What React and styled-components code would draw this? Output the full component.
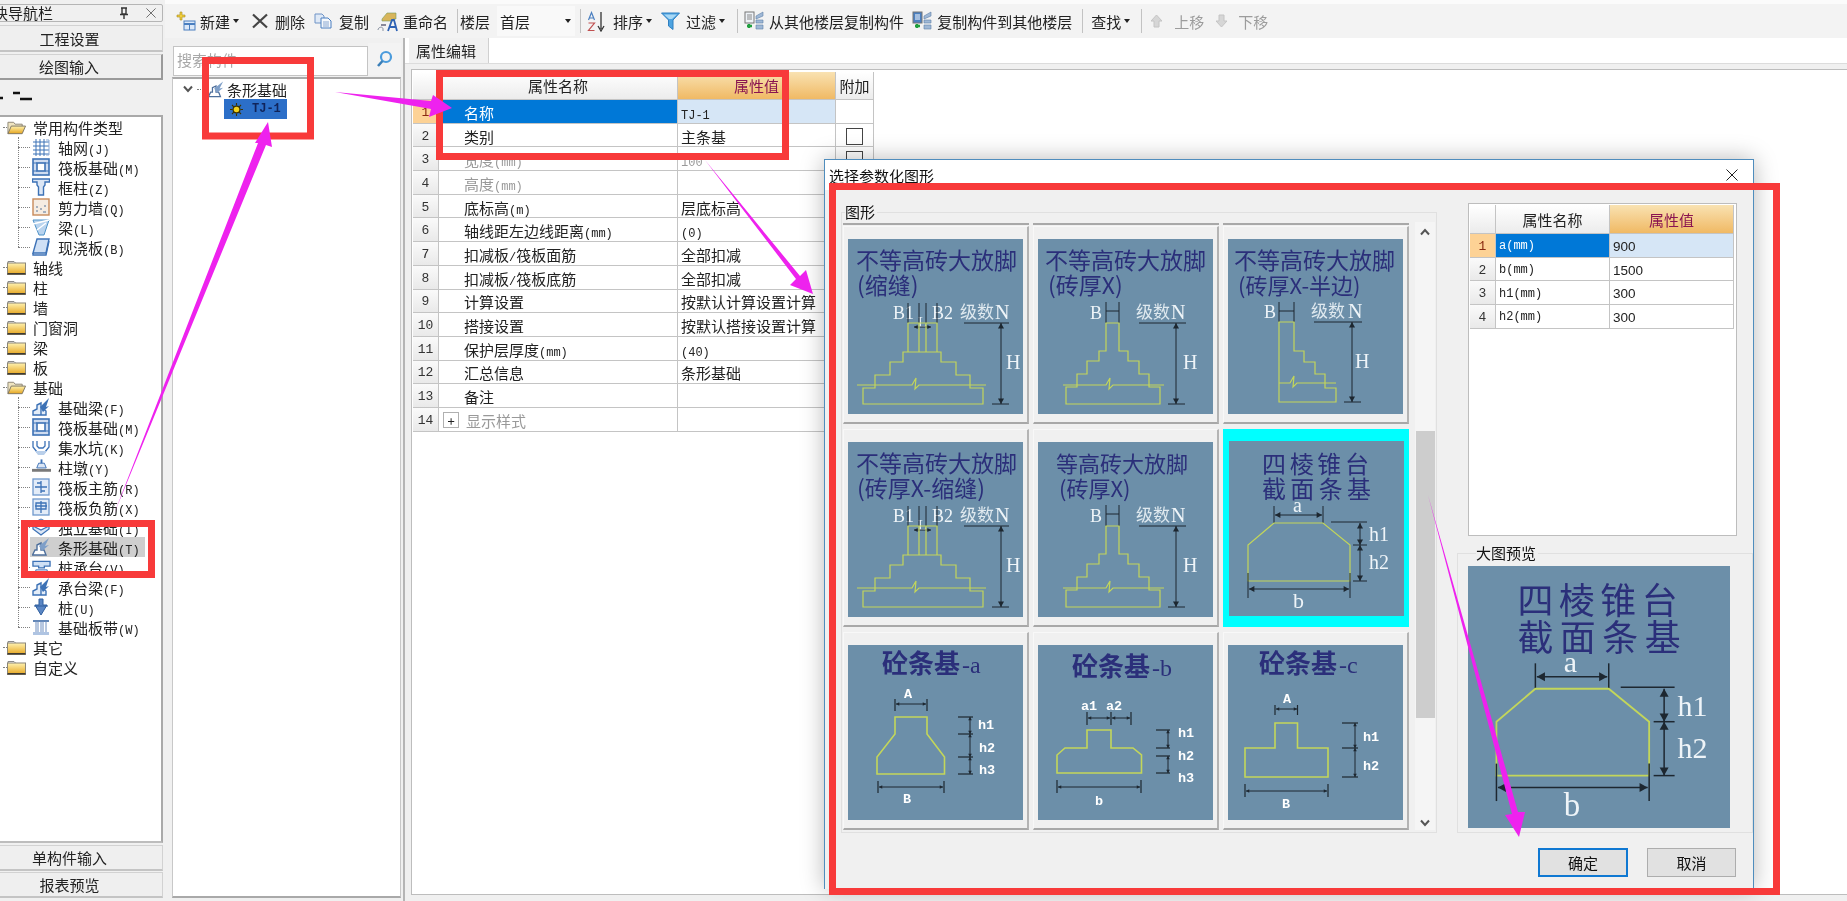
import React from "react";
import styled, { createGlobalStyle } from "styled-components";

const GlobalStyle = createGlobalStyle`
  html, body {
    margin: 0;
    padding: 0;
    background: #f0f0f0;
  }
  body {
    font-family: "Noto Sans CJK SC", "Liberation Sans", sans-serif;
    font-size: 15px;
    color: #222;
  }
`;

/* the source capture is a soft, rescaled bitmap */
const Page = styled.div`
  position: relative;
  display: flex;
  width: 1847px;
  height: 901px;
  overflow: hidden;
  background: #f0f0f0;
  filter: blur(0.3px);
`;

/* latin runs are drawn narrower than the chinese ones, like the old bitmap font */
const Lat = styled.span`
  font-family: "Liberation Mono", monospace;
  font-size: 12px;
  font-weight: 400;
`;

const Run = styled.span`
  white-space: nowrap;
`;

function Mixed({ text }) {
  return (
    <Run>
      {text
        .split(/([\x00-\x7f]+)/)
        .filter(Boolean)
        .map((part, i) =>
          /^[\x00-\x7f]/.test(part) ? <Lat key={i}>{part}</Lat> : <span key={i}>{part}</span>
        )}
    </Run>
  );
}

/* ---------- left navigation ---------- */

const Nav = styled.nav`
  flex: none;
  width: 165px;
  height: 901px;
  overflow: hidden;
`;

const NavInner = styled.div`
  display: flex;
  flex-direction: column;
  width: 187px;
  height: 901px;
  margin-left: -24px;
  padding-top: 4px;
  box-sizing: border-box;
`;

const NavTitle = styled.div`
  display: flex;
  align-items: center;
  height: 18px;
  padding-left: 1px;
  border: 1px solid #b5b5b5;
  border-radius: 2px;
  box-sizing: border-box;
  line-height: 16px;
`;

const NavTitleText = styled.span`
  flex: 1;
`;

const NavTitleTool = styled.span`
  display: flex;
  margin-right: ${(p) => p.$mr}px;
`;

const NavButton = styled.div`
  display: flex;
  align-items: center;
  justify-content: center;
  height: ${(p) => p.$h}px;
  margin-top: ${(p) => p.$mt}px;
  box-sizing: border-box;
  border: 1px solid #d2d2d2;
  border-bottom: ${(p) => (p.$active ? "2px solid #9a9a9a" : "2px solid #c4c4c4")};
  border-right: ${(p) => (p.$active ? "2px solid #9a9a9a" : "1px solid #d2d2d2")};
  background: #efefef;
`;

const NavTools = styled.div`
  display: flex;
  align-items: center;
  height: 35px;
  padding-left: 24px;
`;

const Tree = styled.div`
  flex: none;
  width: 187px;
  height: 728px;
  padding-left: 24px;
  box-sizing: border-box;
  background: #fff;
  border-top: 2px solid #a9a9a9;
  border-right: 2px solid #a9a9a9;
  border-bottom: 2px solid #bdbdbd;
`;

const TreeRow = styled.div`
  display: flex;
  align-items: center;
  height: 20px;
  white-space: nowrap;
  width: ${(p) => (p.$selected ? "115px" : "auto")};
  background: ${(p) => (p.$selected ? "#cfcfcf" : "transparent")};
`;

const Connector = styled.span`
  flex: none;
  width: ${(p) => p.$w}px;
  margin-left: ${(p) => p.$ml || 0}px;
  border-top: 1px dotted #808080;
`;

const FolderSlot = styled.span`
  flex: none;
  display: flex;
  width: 19px;
  margin-right: 7px;
`;

const LeafSlot = styled.span`
  flex: none;
  display: flex;
  width: 19px;
  margin: 0 7px 0 2px;
`;

const ChildGroup = styled.div`
  position: relative;
  margin-left: 18px;
  &::before {
    content: "";
    position: absolute;
    top: 0;
    bottom: 10px;
    left: 0;
    border-left: 1px dotted #808080;
  }
`;

const Leaf = styled(TreeRow)`
  margin-left: ${(p) => (p.$selected ? "12px" : "0")};
`;

/* ---------- work area ---------- */

const Work = styled.div`
  flex: 1;
  display: flex;
  flex-direction: column;
  min-width: 0;
`;

const TopStrip = styled.div`
  height: 4px;
  background: #fbfbfb;
`;

const Toolbar = styled.div`
  display: flex;
  align-items: center;
  height: 34px;
  padding-left: 11px;
  background: #f3f3f3;
  white-space: nowrap;
`;

const ToolBtn = styled.div`
  display: flex;
  align-items: center;
  margin-right: ${(p) => p.$mr ?? 10}px;
  color: ${(p) => (p.$off ? "#9c9c9c" : "#222")};
`;

const ToolIcon = styled.span`
  display: flex;
  flex: none;
  width: ${(p) => p.$w}px;
  margin-right: ${(p) => p.$gap ?? 5}px;
`;

const Caret = styled.span`
  display: inline-block;
  margin-left: 3px;
  border-top: 4px solid #222;
  border-left: 3.5px solid transparent;
  border-right: 3.5px solid transparent;
`;

const ToolSep = styled.span`
  width: 1px;
  height: 24px;
  margin: 0 ${(p) => p.$r ?? 8}px 0 ${(p) => p.$l ?? 0}px;
  background: #c2c2c2;
`;

const FloorSelect = styled.div`
  display: flex;
  align-items: center;
  justify-content: space-between;
  box-sizing: border-box;
  width: 78px;
  height: 30px;
  margin: 0 5px 0 7px;
  padding: 0 4px 0 3px;
  background: #f9f9f9;
`;

const Panes = styled.div`
  flex: 1;
  display: flex;
  min-height: 0;
`;

const SearchPane = styled.div`
  flex: none;
  display: flex;
  flex-direction: column;
  width: 229px;
  margin: 5px 0 0 7px;
`;

const SearchRow = styled.div`
  display: flex;
  height: 32px;
  margin-left: 1px;
`;

const SearchInput = styled.div`
  flex: none;
  width: 195px;
  height: 30px;
  margin-top: 3px;
  box-sizing: border-box;
  padding-left: 3px;
  line-height: 26px;
  color: #a8a8a8;
  background: #fff;
  border: 1px solid #c4c4c4;
`;

const SearchGo = styled.div`
  flex: 1;
  display: flex;
  align-items: center;
  justify-content: center;
  background: #f3f3f3;
`;

const SearchTree = styled.div`
  flex: 1;
  box-sizing: border-box;
  margin: 2px 0 3px 0;
  padding: 0 0 0 10px;
  background: #fff;
  border: 1px solid #c8c8c8;
  border-top: 2px solid #a9a9a9;
  border-bottom: 2px solid #a9a9a9;
`;

const SearchNode = styled.div`
  display: flex;
  align-items: center;
  height: 20px;
`;

const Chevron = styled.span`
  display: flex;
  width: 14px;
`;

const NodeIcon = styled.span`
  flex: none;
  display: flex;
  width: 16px;
  margin: 0 3px 0 1px;
  svg {
    width: 16px;
    height: 19px;
  }
`;

const SelectedNode = styled.div`
  display: flex;
  align-items: center;
  height: 20px;
  width: 63px;
  margin-left: 41px;
  padding-left: 6px;
  box-sizing: border-box;
  background: #2c6fc8;
  color: #10245a;
`;

const NodeCode = styled.span`
  margin-left: 9px;
  font-family: "Liberation Mono", monospace;
  font-size: 12px;
  font-weight: 700;
`;

const EditPane = styled.div`
  flex: 1;
  display: flex;
  flex-direction: column;
  margin-left: 2px;
  background: #fff;
  border-left: 2px solid #b5b5b5;
  min-width: 0;
`;

const TabRow = styled.div`
  display: flex;
  align-items: flex-end;
  height: 26px;
  box-sizing: border-box;
  border-bottom: 1px solid #dcdcdc;
  background: #fff;
`;

const Tab = styled.div`
  width: 80px;
  height: 25px;
  margin-left: 4px;
  box-sizing: border-box;
  padding-left: 7px;
  line-height: 26px;
  background: #f1f1f1;
  border-right: 1px solid #d0d0d0;
`;

const EditBody = styled.div`
  flex: 1;
  padding: 5px 0 6px 6px;
  background: #f0f0f0;
  min-height: 0;
  display: flex;
`;

const GridBox = styled.div`
  flex: 1;
  padding: 2px 0 0 1px;
  background: #fff;
  border: 1px solid #bdbdbd;
  border-right: none;
`;

const PropGrid = styled.div`
  display: grid;
  grid-template-columns: ${(p) => p.$cols};
  grid-auto-rows: 23.7px;
  grid-template-rows: ${(p) => p.$head}px;
`;

const GridCell = styled.div`
  display: flex;
  align-items: center;
  box-sizing: border-box;
  padding-left: ${(p) => p.$pl ?? 3}px;
  padding-top: 2px;
  border-right: 1px solid #c4c4c4;
  border-bottom: 1px solid #c4c4c4;
  white-space: nowrap;
  overflow: hidden;
  background: ${(p) => p.$bg || "#fff"};
  color: ${(p) => p.$color || "#222"};
`;

const HeadCell = styled(GridCell)`
  justify-content: center;
  padding-left: 0;
  padding-top: 0;
  background: linear-gradient(#ffffff, #ececec);
`;

const ValueHead = styled(HeadCell)`
  background: linear-gradient(#f9e2b2, #f0b964);
  color: #8a1450;
`;

const NumHead = styled(HeadCell)`
  background: linear-gradient(#ffffff, #ebebeb);
`;

const NumCell = styled(GridCell)`
  justify-content: center;
  padding-left: 0;
  font-family: "Liberation Mono", monospace;
  font-size: 13px;
  background: ${(p) => (p.$on ? "#fdd295" : "linear-gradient(#fafafa, #e9e9e9)")};
  color: ${(p) => (p.$on ? "#8a2a10" : "#333")};
`;

const SansNum = styled.span`
  font-family: "Liberation Sans", sans-serif;
  font-size: 13.5px;
`;

const CheckBox = styled.span`
  width: 15px;
  height: 15px;
  margin: 0 auto;
  border: 1px solid #444;
  background: #fff;
`;

const PlusBox = styled.span`
  flex: none;
  display: flex;
  align-items: center;
  justify-content: center;
  width: 14px;
  height: 14px;
  margin-right: 7px;
  border: 1px solid #b0b0b0;
  font-size: 13px;
  line-height: 13px;
  color: #222;
`;

/* ---------- dialog ---------- */

const Dialog = styled.section`
  position: absolute;
  left: 824px;
  top: 159px;
  display: flex;
  flex-direction: column;
  width: 930px;
  height: 730px;
  box-sizing: border-box;
  background: #f0f0f0;
  border: 1px solid #4f8dbd;
  border-bottom: none;
  box-shadow: 0 0 22px rgba(0, 0, 0, 0.28);
`;

const DialogTitle = styled.header`
  flex: none;
  display: flex;
  align-items: center;
  justify-content: space-between;
  height: 30px;
  padding: 0 15px 0 4px;
  background: #fff;
  color: #111;
`;

const DialogBody = styled.div`
  flex: 1;
  display: flex;
  flex-direction: column;
  padding: 12px 0 0 16px;
`;

const DialogMain = styled.div`
  display: flex;
  height: 631px;
`;

const Group = styled.fieldset`
  box-sizing: border-box;
  margin: 0;
  min-width: 0;
  border: 1px solid #e0e0e0;
  padding: 0 ${(p) => p.$pr ?? 0}px 0 ${(p) => p.$pl ?? 0}px;
`;

const ShapeGroup = styled(Group)`
  flex: none;
  width: 596px;
  height: 631px;
`;

const GroupLegend = styled.legend`
  margin-left: ${(p) => p.$ml ?? 2}px;
  padding: 0 2px 0 0;
  height: 20px;
  line-height: 20px;
  color: #111;
`;

const ShapeArea = styled.div`
  display: flex;
  height: 608px;
`;

const ShapeColumn = styled.div`
  flex: none;
  width: 566px;
`;

/* bottom edge of the row scrolled out above the first visible one */
const ClipRow = styled.div`
  display: grid;
  grid-template-columns: repeat(3, 186px);
  column-gap: 4px;
  height: 3px;
  margin-bottom: 1px;
`;

const ClipEdge = styled.div`
  background: #f0f0f0;
  border-bottom: 2px solid #a8a8a8;
`;

const ShapeGrid = styled.div`
  display: grid;
  grid-template-columns: repeat(3, 186px);
  grid-template-rows: repeat(3, 198px);
  column-gap: 4px;
  row-gap: 5px;
`;

const ShapeCell = styled.div`
  display: flex;
  justify-content: center;
  box-sizing: border-box;
  padding-top: 12px;
  background: ${(p) => (p.$on ? "#00ffff" : "#f0f0f0")};
  border-top: ${(p) => (p.$on ? "none" : "1px solid #f8f8f8")};
  border-left: ${(p) => (p.$on ? "none" : "1px solid #f8f8f8")};
  border-right: ${(p) => (p.$on ? "none" : "2px solid #b4b4b4")};
  border-bottom: ${(p) => (p.$on ? "none" : "2px solid #a8a8a8")};
`;

const ScrollTrack = styled.div`
  flex: none;
  display: flex;
  flex-direction: column;
  align-items: center;
  width: 20px;
  margin-left: 6px;
  background: #f5f5f5;
`;

const ScrollArrow = styled.span`
  display: flex;
  margin-top: ${(p) => p.$mt}px;
`;

const ScrollThumb = styled.div`
  flex: none;
  width: 19px;
  height: 287px;
  margin-top: 195px;
  background: #cdcdcd;
`;

const RightCol = styled.div`
  flex: none;
  display: flex;
  flex-direction: column;
  width: 296px;
  margin-left: 20px;
`;

const ParamBox = styled.div`
  width: 269px;
  height: 333px;
  margin: 1px 0 0 11px;
  padding: 1px 0 0 1px;
  box-sizing: border-box;
  background: #fff;
  border: 1px solid #bdbdbd;
`;

const PreviewGroup = styled(Group)`
  width: 296px;
  height: 290px;
  margin-top: 7px;
  padding-top: 3px;
`;

const DialogFooter = styled.footer`
  display: flex;
  justify-content: flex-end;
  gap: 19px;
  padding: 15px 17px 0 0;
`;

const DialogButton = styled.button`
  width: ${(p) => p.$w}px;
  height: 29px;
  padding: 0;
  font: inherit;
  color: #111;
  background: #e1e1e1;
  border: ${(p) => (p.$primary ? "2px solid #0f78d2" : "1px solid #adadad")};
`;

/* ---------- parametric drawings ---------- */

const Drawing = styled.svg`
  display: block;
  flex: none;
  background: #6c8fa9;
`;

const TitleCn = styled.text`
  font-family: "Noto Sans CJK SC", sans-serif;
  font-size: ${(p) => p.$size || 23}px;
  font-weight: ${(p) => p.$weight || 400};
  fill: #2b2f7a;
`;

const Serif = styled.text`
  font-family: "Liberation Serif", "Noto Sans CJK SC", serif;
  font-size: ${(p) => p.$size || 18}px;
  fill: ${(p) => p.$fill || "#eef4f8"};
`;

const CnLabel = styled.text`
  font-family: "Noto Sans CJK SC", sans-serif;
  font-size: 17px;
  fill: #dfe9ef;
`;

const BoldLabel = styled.text`
  font-family: "Liberation Mono", monospace;
  font-size: 13.5px;
  font-weight: 700;
  fill: #fff;
`;

const DARK = "#1d2730";
const YELLOW = "#c3d65a";

function VDim({ x, y1, y2, s = 3 }) {
  return (
    <g>
      <line x1={x} x2={x} y1={y1} y2={y2} stroke={DARK} />
      <polygon points={`${x},${y1} ${x - s},${y1 + s * 1.8} ${x + s},${y1 + s * 1.8}`} fill={DARK} />
      <polygon points={`${x},${y2} ${x - s},${y2 - s * 1.8} ${x + s},${y2 - s * 1.8}`} fill={DARK} />
    </g>
  );
}

function HDim({ y, x1, x2, s = 3 }) {
  return (
    <g>
      <line x1={x1} x2={x2} y1={y} y2={y} stroke={DARK} />
      <polygon points={`${x1},${y} ${x1 + s * 1.8},${y - s} ${x1 + s * 1.8},${y + s}`} fill={DARK} />
      <polygon points={`${x2},${y} ${x2 - s * 1.8},${y - s} ${x2 - s * 1.8},${y + s}`} fill={DARK} />
    </g>
  );
}

function Ln({ x1, y1, x2 = x1, y2 = y1, w = 1 }) {
  return <line x1={x1} y1={y1} x2={x2} y2={y2} stroke={DARK} strokeWidth={w} />;
}

function Shape({ d, w = 1.2 }) {
  return <path d={d} fill="none" stroke={YELLOW} strokeWidth={w} />;
}

function Svg({ size = 175, children }) {
  return (
    <Drawing width={size} height={size} viewBox="0 0 175 175">
      {children}
    </Drawing>
  );
}

function BrickSplit({ sub }) {
  return (
    <Svg>
      <TitleCn x="8" y="30">不等高砖大放脚</TitleCn>
      <TitleCn x="9" y="55">{sub}</TitleCn>
      <Serif x="45" y="80">B1</Serif>
      <Serif x="84" y="80">B2</Serif>
      <CnLabel x="112" y="79">级数</CnLabel>
      <Serif x="147" y="80" $size={20}>N</Serif>
      <Serif x="70" y="88" $size={14}>L</Serif>
      <Ln x1={60} y1={64} y2={84} />
      <Ln x1={71} y1={64} y2={84} />
      <Ln x1={78} y1={64} y2={84} />
      <Ln x1={89} y1={64} y2={84} />
      <HDim y={88} x1={66} x2={83} s={2} />
      <Shape d="M71 84V113H60V84H89V113H78V84M71 113H78V84M60 113H55V123H42V136H27V149H15V165H135V149H122V136H108V123H93V113H89" />
      <Shape d="M9 146H64L68 139L67 150L71 146H138" />
      <Ln x1={116} x2={161} y1={84} />
      <VDim x={153} y1={84} y2={165} />
      <Ln x1={144} x2={161} y1={165} />
      <Serif x="158" y="130" $size={20}>H</Serif>
    </Svg>
  );
}

function BrickSingle({ title, tx = 7, sub, size = 23 }) {
  return (
    <Svg>
      <TitleCn x={tx} y="30" $size={size}>{title}</TitleCn>
      <TitleCn x={tx + 3} y="55" $size={size}>{sub}</TitleCn>
      <Serif x="52" y="80">B</Serif>
      <Ln x1={68} y1={63} y2={84} />
      <Ln x1={81} y1={63} y2={84} />
      <Ln x1={68} x2={81} y1={72} />
      <CnLabel x="98" y="79">级数</CnLabel>
      <Serif x="133" y="80" $size={20}>N</Serif>
      <Shape d="M68 84H81V112H90V122H101V135H111V148H122V165H28V148H39V135H49V122H61V112H68Z" />
      <Shape d="M25 146H68L72 139L71 150L75 146H126" />
      <Ln x1={101} x2={148} y1={84} />
      <VDim x={138} y1={84} y2={165} />
      <Ln x1={130} x2={147} y1={165} />
      <Serif x="145" y="130" $size={20}>H</Serif>
    </Svg>
  );
}

function BrickHalf() {
  return (
    <Svg>
      <TitleCn x="6" y="30">不等高砖大放脚</TitleCn>
      <TitleCn x="10" y="55" $size={22}>(砖厚X-半边)</TitleCn>
      <Serif x="36" y="79">B</Serif>
      <Ln x1={51} y1={63} y2={83} />
      <Ln x1={66} y1={63} y2={83} />
      <Ln x1={51} x2={66} y1={72} />
      <CnLabel x="83" y="78">级数</CnLabel>
      <Serif x="120" y="79" $size={20}>N</Serif>
      <Shape d="M51 83H66V112H76V123H87V135H97V149H108V163H51Z" />
      <Shape d="M51 144H62L66 137L65 148L69 144H108" />
      <Ln x1={86} x2={134} y1={83} />
      <VDim x={124} y1={83} y2={163} />
      <Ln x1={116} x2={133} y1={163} />
      <Serif x="127" y="129" $size={20}>H</Serif>
    </Svg>
  );
}

function Frustum({ size }) {
  return (
    <Svg size={size}>
      <TitleCn x="33" y="32" $size={24} textLength="107">四棱锥台</TitleCn>
      <TitleCn x="33" y="57" $size={24} textLength="109">截面条基</TitleCn>
      <Serif x="64" y="71" $size={20}>a</Serif>
      <Ln x1={45} y1={65} y2={82} />
      <Ln x1={94} y1={65} y2={82} />
      <HDim y={74} x1={46} x2={93} />
      <Shape d="M45 82H94L121 104V140H19V104Z" />
      <Ln x1={102} x2={138} y1={81} />
      <Ln x1={124} x2={138} y1={104} />
      <Ln x1={124} x2={138} y1={140} />
      <VDim x={131} y1={82} y2={104} />
      <VDim x={131} y1={104} y2={140} />
      <Serif x="140" y="100" $size={20}>h1</Serif>
      <Serif x="140" y="128" $size={20}>h2</Serif>
      <Ln x1={19} y1={132} y2={157} />
      <Ln x1={121} y1={132} y2={157} />
      <HDim y={148} x1={20} x2={120} />
      <Serif x="64" y="167" $size={22}>b</Serif>
    </Svg>
  );
}

function Concrete({ letter, tx, ty, children }) {
  return (
    <Svg>
      <TitleCn x={tx} y={ty} $size={26} $weight={700}>砼条基</TitleCn>
      <Serif x={tx + 80} y={ty} $size={24} $fill="#2b2f7a">-{letter}</Serif>
      {children}
    </Svg>
  );
}

function ConcreteA() {
  return (
    <Concrete letter="a" tx={34} ty={28}>
      <BoldLabel x="56" y="53">A</BoldLabel>
      <Ln x1={47} y1={54} y2={66} w={1.2} />
      <Ln x1={79} y1={54} y2={66} w={1.2} />
      <HDim y={59} x1={48} x2={78} s={1.8} />
      <Shape w={1.6} d="M47 72H79V89L96.5 112V129H29V112L47 89Z" />
      {[72, 89, 112, 129].map((y) => <Ln key={y} x1={110} x2={125} y1={y} w={1.2} />)}
      <VDim x={122} y1={72} y2={89} s={1.8} />
      <VDim x={122} y1={89} y2={112} s={1.8} />
      <VDim x={122} y1={112} y2={129} s={1.8} />
      <BoldLabel x="130" y="84">h1</BoldLabel>
      <BoldLabel x="131" y="107">h2</BoldLabel>
      <BoldLabel x="131" y="129">h3</BoldLabel>
      <Ln x1={30} y1={136} y2={148} w={1.2} />
      <Ln x1={96} y1={136} y2={148} w={1.2} />
      <HDim y={142} x1={31} x2={95} s={1.8} />
      <BoldLabel x="55" y="158">B</BoldLabel>
    </Concrete>
  );
}

function ConcreteB() {
  return (
    <Concrete letter="b" tx={34} ty={31}>
      <BoldLabel x="43" y="65">a1</BoldLabel>
      <BoldLabel x="68" y="65">a2</BoldLabel>
      <Ln x1={49} y1={67} y2={80} w={1.2} />
      <Ln x1={73} y1={67} y2={80} w={1.2} />
      <Ln x1={93} y1={67} y2={80} w={1.2} />
      <HDim y={73} x1={50} x2={72} s={1.8} />
      <HDim y={73} x1={74} x2={92} s={1.8} />
      <Shape w={1.6} d="M49 85H73V103H95L103.5 110V128H19V110L27 103H49Z" />
      {[85, 103, 111, 128].map((y) => <Ln key={y} x1={118} x2={132} y1={y} w={1.2} />)}
      <VDim x={130} y1={85} y2={103} s={1.8} />
      <VDim x={130} y1={111} y2={128} s={1.8} />
      <BoldLabel x="140" y="92">h1</BoldLabel>
      <BoldLabel x="140" y="115">h2</BoldLabel>
      <BoldLabel x="140" y="137">h3</BoldLabel>
      <Ln x1={19} y1={135} y2={148} w={1.2} />
      <Ln x1={103} y1={135} y2={148} w={1.2} />
      <HDim y={142} x1={20} x2={102} s={1.8} />
      <BoldLabel x="57" y="160">b</BoldLabel>
    </Concrete>
  );
}

function ConcreteC() {
  return (
    <Concrete letter="c" tx={31} ty={28}>
      <BoldLabel x="55" y="58">A</BoldLabel>
      <Ln x1={47} y1={60} y2={70} w={1.2} />
      <Ln x1={69.5} y1={60} y2={70} w={1.2} />
      <HDim y={64} x1={48} x2={69} s={1.8} />
      <Shape w={1.6} d="M47 78H69.5V103H100V132H17V103H47Z" />
      {[78, 103, 132].map((y) => <Ln key={y} x1={114} x2={130} y1={y} w={1.2} />)}
      <VDim x={127} y1={78} y2={103} s={1.8} />
      <VDim x={127} y1={103} y2={132} s={1.8} />
      <BoldLabel x="135" y="96">h1</BoldLabel>
      <BoldLabel x="135" y="125">h2</BoldLabel>
      <Ln x1={17} y1={139} y2={152} w={1.2} />
      <Ln x1={100} y1={139} y2={152} w={1.2} />
      <HDim y={146} x1={18} x2={99} s={1.8} />
      <BoldLabel x="54" y="163">B</BoldLabel>
    </Concrete>
  );
}

/* ---------- icons ---------- */

const BLUE = "#3d72b6";

const Ico = ({ w = 18, h = 18, vb = "0 0 18 18", children }) => (
  <svg width={w} height={h} viewBox={vb} fill="none">
    {children}
  </svg>
);

const GradDefs = () => (
  <svg width="0" height="0" style={{ position: "absolute" }}>
    <defs>
      <linearGradient id="folderFill" x1="0" y1="0" x2="0" y2="1">
        <stop offset="0" stopColor="#fff2b0" />
        <stop offset="1" stopColor="#e5a51f" />
      </linearGradient>
    </defs>
  </svg>
);

const FolderClosed = () => (
  <Ico w={19} h={15} vb="0 0 19 15">
    <path d="M1 3V1.5H7L8.5 3" stroke="#8a8a8a" />
    <rect x="0.5" y="3" width="18" height="11.5" fill="url(#folderFill)" stroke="#8c8676" />
    <rect x="0.5" y="13" width="18" height="1.5" fill="#3e3a30" />
  </Ico>
);

const FolderOpen = () => (
  <Ico w={20} h={15} vb="0 0 20 15">
    <path d="M1 14V2H7L8.5 4H16V6" fill="#efe4c0" stroke="#8c8676" />
    <path d="M1 14L4.5 6H19.5L16 14Z" fill="url(#folderFill)" stroke="#7c7463" />
  </Ico>
);

const treeIcons = {
  grid: (
    <Ico>
      <path d="M1 4H17M1 8H17M1 12H17M1 16H17M4 1V18M8 1V18M12 1V18" stroke={BLUE} />
      <path d="M14 2H17V17H14" stroke="#89a9d6" />
    </Ico>
  ),
  raft: (
    <Ico>
      <rect x="1" y="1" width="16" height="16" fill="#cfdcf0" stroke={BLUE} strokeWidth="1.6" />
      <rect x="5" y="5" width="8" height="8" fill="#fff" stroke={BLUE} strokeWidth="1.6" />
      <path d="M1 5H5M13 5H17M1 13H5M13 13H17" stroke={BLUE} />
    </Ico>
  ),
  column: (
    <Ico>
      <path d="M0.5 1H17.5V4H13V7L11.5 9V17H6.5V9L5 7V4H0.5Z" fill="#dbe6f5" stroke={BLUE} strokeWidth="1.4" />
    </Ico>
  ),
  wall: (
    <Ico>
      <rect x="1" y="1" width="16" height="16" fill="#f5ece2" stroke="#c88a5a" strokeWidth="1.4" />
      <path d="M4 13H6M8 11H10M11 14H14M4 9H6M12 8H14" stroke="#8a9ab0" strokeWidth="1.4" />
    </Ico>
  ),
  beam: (
    <Ico>
      <path d="M1 2H17L12 17H7Z" fill="#b8d3ee" stroke="#4f93c8" />
      <path d="M1 6L17 2M5 12L14 5" stroke="#fff" strokeWidth="1.4" />
    </Ico>
  ),
  slab: (
    <Ico>
      <path d="M5 1H17L14 15H1Z" fill="#cfe0f5" stroke={BLUE} strokeWidth="1.4" />
      <path d="M1 15V17H14L17 3" stroke={BLUE} strokeWidth="1.4" />
    </Ico>
  ),
  footing: (
    <Ico>
      <path d="M1 17V13L5 11V7L9 5V17ZM9 17H14V13L10 10" fill="#e4edf8" stroke={BLUE} strokeWidth="1.4" />
      <path d="M8 9L17 0L14 9L17 8L11 14Z" fill="#3d72b6" />
    </Ico>
  ),
  pit: (
    <Ico>
      <path d="M1 3V9L5 14H13L17 9V3M5 3V8L7 10H11L13 8V3" stroke={BLUE} strokeWidth="1.3" />
      <path d="M3 13L6 17H12L15 13" fill="#b9cfea" />
    </Ico>
  ),
  pier: (
    <Ico w={20} vb="0 0 20 18">
      <path d="M7 5H13L15 10H5Z" fill="#dbe6f5" stroke={BLUE} />
      <path d="M9 1H11V5H9Z" fill={BLUE} />
      <rect x="0" y="11" width="20" height="3" fill="#7a7a7a" />
    </Ico>
  ),
  rebarMain: (
    <Ico>
      <rect x="1" y="1" width="16" height="16" fill="#e3ecf8" stroke="#6f98cc" strokeWidth="1.3" />
      <path d="M9 3V15M3 9H15M5 5H9M9 13H13" stroke={BLUE} strokeWidth="1.3" />
    </Ico>
  ),
  rebarNeg: (
    <Ico>
      <rect x="1" y="1" width="16" height="16" fill="#e3ecf8" stroke="#6f98cc" strokeWidth="1.3" />
      <path d="M4 5H14V11H4ZM9 3V15M3 8H15" stroke={BLUE} strokeWidth="1.3" />
    </Ico>
  ),
  isolated: (
    <Ico>
      <path d="M1 8L9 12L17 8V11L9 17L1 11Z" fill="#dbe6f5" stroke={BLUE} strokeWidth="1.3" />
      <path d="M5 3L9 1L13 3L9 7Z" stroke={BLUE} />
    </Ico>
  ),
  strip: (
    <Ico>
      <path d="M0.5 17L3 12H5V7L9 5V12H12L14 17Z" fill="#fff" stroke="#4d6f9c" strokeWidth="1.4" />
      <path d="M7 8L17 0L13 8L17 7L10 13Z" fill="#7f9fc8" />
    </Ico>
  ),
  cap: (
    <Ico w={20} vb="0 0 20 18">
      <path d="M1 3H19V8H13V10H7V8H1Z" fill="#cfe0f5" stroke={BLUE} strokeWidth="1.4" />
      <path d="M4 12H16V15H4Z" fill="#e8eff8" stroke={BLUE} />
    </Ico>
  ),
  pile: (
    <Ico>
      <path d="M7 1H11V7H15L9 17L3 7H7Z" fill="#5a86c4" stroke="#2f5f9f" />
      <path d="M2 8H16" stroke="#2f5f9f" />
    </Ico>
  ),
  band: (
    <Ico>
      <path d="M1 3H17M1 15H17" stroke="#2f5f9f" strokeWidth="1.6" />
      <path d="M4 3V15M9 3V15M14 3V15M6 3V15M11 3V15" stroke="#6e8fc0" />
      <rect x="1" y="14" width="16" height="3" fill="#afc4e2" />
    </Ico>
  )
};

const GearIcon = () => (
  <Ico w={13} h={13} vb="0 0 13 13">
    <circle cx="6.5" cy="6.5" r="3.4" fill="#f2d21c" stroke="#3c3200" strokeWidth="1.2" />
    <path d="M6.5 0V2.6M6.5 10.4V13M0 6.5H2.6M10.4 6.5H13M2 2L3.8 3.8M9.2 9.2L11 11M2 11L3.8 9.2M9.2 3.8L11 2" stroke="#3c3200" strokeWidth="1.1" />
  </Ico>
);

const SearchGlass = () => (
  <Ico>
    <circle cx="10" cy="7" r="5" stroke="#4a9bdc" strokeWidth="2.2" />
    <path d="M6.5 11L2 16" stroke="#3b7fb8" strokeWidth="2.6" />
  </Ico>
);

const CloseX = ({ size = 12, color = "#222" }) => (
  <Ico w={size} h={size} vb="0 0 12 12">
    <path d="M0.5 0.5L11.5 11.5M11.5 0.5L0.5 11.5" stroke={color} />
  </Ico>
);

const PinIcon = () => (
  <Ico w={10} h={13} vb="0 0 10 13">
    <path d="M2 1H8M3 1V7H7V1M1 7.5H9M5 8V12" stroke="#333" strokeWidth="1.4" />
  </Ico>
);

const MiniChevron = ({ up }) => (
  <Ico w={10} h={8} vb="0 0 10 8">
    <path d={up ? "M1 6.5L5 2L9 6.5" : "M1 1.5L5 6L9 1.5"} stroke="#555" strokeWidth="2" />
  </Ico>
);

const NewIcon = () => (
  <Ico w={20} h={20} vb="0 0 20 20">
    <path d="M4 1H6V4H9V6H6V9H4V6H1V4H4Z" fill="#f2cf3b" stroke="#a58a24" strokeWidth="0.6" />
    <rect x="8" y="10" width="11" height="9" fill="#dbe8f8" stroke="#4a7fc0" />
    <path d="M8 13H19" stroke="#4a7fc0" strokeWidth="2" />
    <path d="M13.5 14V19" stroke="#4a7fc0" />
  </Ico>
);

const DeleteIcon = () => (
  <Ico w={16} h={16} vb="0 0 16 16">
    <path d="M1 1.5L15 14.5M15 1.5L1 14.5" stroke="#444" strokeWidth="2.2" />
  </Ico>
);

const CopyIcon = () => (
  <Ico w={18} h={16} vb="0 0 18 16">
    <path d="M1 1H8L10 3V10H1Z" fill="#dfe9f6" stroke="#6e93c6" />
    <path d="M7 5H14L17 8V15H7Z" fill="#f5f8fc" stroke="#4a7fc0" />
    <path d="M9 9H15M9 11H15M9 13H15" stroke="#88a6d0" />
  </Ico>
);

const RenameIcon = () => (
  <Ico w={21} h={21} vb="0 0 21 21">
    <path d="M5 8L10 2H19V8H16V10H5Z" fill="#d8b55b" stroke="#7a9c5a" strokeWidth="0.6" />
    <path d="M4 14H9" stroke="#889" strokeWidth="2" />
    <path d="M11 20L15 9H17L20 20M12.5 16H18.5" stroke="#2e62b4" strokeWidth="1.8" />
    <path d="M1 19C1 16 6 15 6 18V20" stroke="#8891a0" />
  </Ico>
);

const SortIcon = () => (
  <Ico w={21} h={21} vb="0 0 21 21">
    <path d="M1.5 9L4.5 1.5L7.5 9M2.5 7H6.5" stroke="#4a7fc0" strokeWidth="1.2" />
    <path d="M1.5 12H7.5L1.5 19.5H7.5" stroke="#c05050" strokeWidth="1.2" />
    <path d="M14 1V18M11 15L14 20L17 15" stroke="#333" strokeWidth="1.3" />
  </Ico>
);

const FunnelIcon = () => (
  <Ico w={19} h={18} vb="0 0 19 18">
    <path d="M0.5 1H18.5L12 8V17.5L7.5 14V8Z" fill="#4da3e0" stroke="#2f7fc0" />
    <path d="M3 2.5H16L11 7H8Z" fill="#a8d8f5" />
  </Ico>
);

const FloorCopyIcon = ({ flip }) => (
  <Ico w={20} h={20} vb="0 0 20 20">
    <rect x="1" y="1" width="9" height="11" fill={flip ? "#4a7fc0" : "#eef2f7"} stroke="#777" />
    <path d="M3 4H8M3 6H8M3 8H8" stroke={flip ? "#fff" : "#888"} />
    <path d="M12 5L19 1V5L12 8ZM12 9H19V12H12ZM12 14H19V18H12Z" fill="#9fb8d6" stroke="#5f7fa8" strokeWidth="0.6" />
    <path d="M5 13V17M3 15H8" stroke="#1f9f3e" strokeWidth="2.4" />
  </Ico>
);

const MoveIcon = ({ down }) => (
  <Ico w={11} h={14} vb="0 0 11 14">
    <path d={down ? "M3 1H8V7H11L5.5 13L0 7H3Z" : "M3 13H8V7H11L5.5 1L0 7H3Z"} fill="#d6d6d6" stroke="#c4c4c4" />
  </Ico>
);

/* ---------- overlays ---------- */

const Annotations = styled.svg`
  position: absolute;
  left: 0;
  top: 0;
  pointer-events: none;
`;

const RED = "#f83a3a";
const MAGENTA = "#ee22ee";

const redBoxes = [
  [205.5, 60.5, 105, 75.5],
  [24.5, 523.5, 127, 51],
  [439.5, 73.5, 346, 83],
  [832.5, 186.5, 944, 705]
];

const arrows = [
  "335,92 431,101 433,95 452,108 429,117 431,109",
  "114,514 258,143 255,143 268,122 272,147 266,145",
  "705,160 800,276 806,270 813,294 790,285 796,279",
  "1428,495 1518,812 1525,812 1519,837 1505,815 1512,814"
];

/* ---------- data ---------- */

const leavesCommon = [
  ["grid", "轴网(J)"],
  ["raft", "筏板基础(M)"],
  ["column", "框柱(Z)"],
  ["wall", "剪力墙(Q)"],
  ["beam", "梁(L)"],
  ["slab", "现浇板(B)"]
];

const leavesBase = [
  ["footing", "基础梁(F)"],
  ["raft", "筏板基础(M)"],
  ["pit", "集水坑(K)"],
  ["pier", "柱墩(Y)"],
  ["rebarMain", "筏板主筋(R)"],
  ["rebarNeg", "筏板负筋(X)"],
  ["isolated", "独立基础(I)"],
  ["strip", "条形基础(T)", true],
  ["cap", "桩承台(V)"],
  ["footing", "承台梁(F)"],
  ["pile", "桩(U)"],
  ["band", "基础板带(W)"]
];

const rows = [
  ["名称", "TJ-1"],
  ["类别", "主条基", "check"],
  ["宽度(mm)", "100", "check", true],
  ["高度(mm)", "", "check", true],
  ["底标高(m)", "层底标高"],
  ["轴线距左边线距离(mm)", "(0)"],
  ["扣减板/筏板面筋", "全部扣减"],
  ["扣减板/筏板底筋", "全部扣减"],
  ["计算设置", "按默认计算设置计算"],
  ["搭接设置", "按默认搭接设置计算"],
  ["保护层厚度(mm)", "(40)"],
  ["汇总信息", "条形基础"],
  ["备注", ""],
  ["显示样式", "", "plus", true]
];

const params = [
  ["a(mm)", "900"],
  ["b(mm)", "1500"],
  ["h1(mm)", "300"],
  ["h2(mm)", "300"]
];

function FolderRow({ open, label }) {
  return (
    <TreeRow>
      <Connector $w={4} $ml={3} />
      <FolderSlot>{open ? <FolderOpen /> : <FolderClosed />}</FolderSlot>
      <Mixed text={label} />
    </TreeRow>
  );
}

function LeafRows({ items }) {
  return (
    <ChildGroup>
      {items.map(([icon, label, selected]) =>
        selected ? (
          <Leaf key={label} $selected>
            <LeafSlot>{treeIcons[icon]}</LeafSlot>
            <Mixed text={label} />
          </Leaf>
        ) : (
          <TreeRow key={label}>
            <Connector $w={12} />
            <LeafSlot>{treeIcons[icon]}</LeafSlot>
            <Mixed text={label} />
          </TreeRow>
        )
      )}
    </ChildGroup>
  );
}

function Tool({ icon, w, gap, mr, label, caret, off }) {
  return (
    <ToolBtn $mr={mr} $off={off}>
      {icon && <ToolIcon $w={w} $gap={gap}>{icon}</ToolIcon>}
      {label}
      {caret && <Caret />}
    </ToolBtn>
  );
}

const App = () => {
  return (
    <Page>
      <GlobalStyle />
      <GradDefs />

      <Nav>
        <NavInner>
          <NavTitle>
            <NavTitleText>模块导航栏</NavTitleText>
            <NavTitleTool $mr={17}><PinIcon /></NavTitleTool>
            <NavTitleTool $mr={6}><CloseX size={10} color="#555" /></NavTitleTool>
          </NavTitle>
          <NavButton $h={27} $mt={3}>工程设置</NavButton>
          <NavButton $h={26} $mt={2} $active>绘图输入</NavButton>
          <NavTools>
            <Ico w={34} h={16} vb="0 0 34 16">
              <path d="M0 8H3M13 3H20M20 9H32" stroke="#111" strokeWidth="2.4" />
            </Ico>
          </NavTools>
          <Tree>
            <FolderRow open label="常用构件类型" />
            <LeafRows items={leavesCommon} />
            <FolderRow label="轴线" />
            <FolderRow label="柱" />
            <FolderRow label="墙" />
            <FolderRow label="门窗洞" />
            <FolderRow label="梁" />
            <FolderRow label="板" />
            <FolderRow open label="基础" />
            <LeafRows items={leavesBase} />
            <FolderRow label="其它" />
            <FolderRow label="自定义" />
          </Tree>
          <NavButton $h={26} $mt={2}>单构件输入</NavButton>
          <NavButton $h={26} $mt={1}>报表预览</NavButton>
        </NavInner>
      </Nav>

      <Work>
        <TopStrip />
        <Toolbar>
          <Tool icon={<NewIcon />} w={20} gap={4} mr={13} label="新建" caret />
          <Tool icon={<DeleteIcon />} w={16} gap={7} mr={9} label="删除" />
          <Tool icon={<CopyIcon />} w={18} gap={7} mr={8} label="复制" />
          <Tool icon={<RenameIcon />} w={21} label="重命名" mr={9} />
          <ToolSep $r={2} />
          <span>楼层</span>
          <FloorSelect>
            首层
            <Caret />
          </FloorSelect>
          <ToolSep $r={6} />
          <Tool icon={<SortIcon />} w={21} label="排序" caret mr={9} />
          <Tool icon={<FunnelIcon />} w={19} gap={6} label="过滤" caret mr={12} />
          <ToolSep $r={6} />
          <Tool icon={<FloorCopyIcon />} w={20} label="从其他楼层复制构件" mr={8} />
          <Tool icon={<FloorCopyIcon flip />} w={20} label="复制构件到其他楼层" />
          <ToolSep $r={8} />
          <Tool label="查找" caret mr={11} />
          <ToolSep $r={9} />
          <Tool icon={<MoveIcon />} w={11} gap={12} label="上移" mr={12} off />
          <Tool icon={<MoveIcon down />} w={11} gap={11} label="下移" off />
        </Toolbar>

        <Panes>
          <SearchPane>
            <SearchRow>
              <SearchInput>搜索构件</SearchInput>
              <SearchGo><SearchGlass /></SearchGo>
            </SearchRow>
            <SearchTree>
              <SearchNode>
                <Chevron><MiniChevron /></Chevron>
                <Connector $w={10} />
                <NodeIcon>{treeIcons.strip}</NodeIcon>
                条形基础
              </SearchNode>
              <SelectedNode>
                <GearIcon />
                <NodeCode>TJ-1</NodeCode>
              </SelectedNode>
            </SearchTree>
          </SearchPane>

          <EditPane>
            <TabRow>
              <Tab>属性编辑</Tab>
            </TabRow>
            <EditBody>
              <GridBox>
                <PropGrid $cols="26px 239px 158px 38px" $head={28}>
                  <NumHead />
                  <HeadCell>属性名称</HeadCell>
                  <ValueHead>属性值</ValueHead>
                  <HeadCell>附加</HeadCell>
                  {rows.map(([name, value, extra, dim], i) => (
                    <React.Fragment key={name}>
                      <NumCell $on={i === 0}>{i + 1}</NumCell>
                      <GridCell
                        $pl={extra === "plus" ? 4 : 25}
                        $bg={i === 0 ? "#0078d7" : undefined}
                        $color={i === 0 ? "#fff" : dim ? "#999" : undefined}
                      >
                        {extra === "plus" && <PlusBox>+</PlusBox>}
                        <Mixed text={name} />
                      </GridCell>
                      <GridCell $bg={i === 0 ? "#d6e6f6" : undefined} $color={dim ? "#999" : undefined}>
                        <Mixed text={value} />
                      </GridCell>
                      <GridCell $pl={0}>
                        {extra === "check" && <CheckBox />}
                      </GridCell>
                    </React.Fragment>
                  ))}
                </PropGrid>
              </GridBox>
            </EditBody>
          </EditPane>
        </Panes>
      </Work>

      <Dialog>
        <DialogTitle>
          选择参数化图形
          <CloseX />
        </DialogTitle>
        <DialogBody>
          <DialogMain>
            <ShapeGroup $pl={1}>
              <GroupLegend>图形</GroupLegend>
              <ShapeArea>
                <ShapeColumn>
                  <ClipRow>
                    <ClipEdge />
                    <ClipEdge />
                    <ClipEdge />
                  </ClipRow>
                  <ShapeGrid>
                    <ShapeCell><BrickSplit sub="(缩缝)" /></ShapeCell>
                    <ShapeCell><BrickSingle title="不等高砖大放脚" sub="(砖厚X)" /></ShapeCell>
                    <ShapeCell><BrickHalf /></ShapeCell>
                    <ShapeCell><BrickSplit sub="(砖厚X-缩缝)" /></ShapeCell>
                    <ShapeCell><BrickSingle title="等高砖大放脚" tx={18} size={22} sub="(砖厚X)" /></ShapeCell>
                    <ShapeCell $on><Frustum /></ShapeCell>
                    <ShapeCell><ConcreteA /></ShapeCell>
                    <ShapeCell><ConcreteB /></ShapeCell>
                    <ShapeCell><ConcreteC /></ShapeCell>
                  </ShapeGrid>
                </ShapeColumn>
                <ScrollTrack>
                  <ScrollArrow $mt={6}><MiniChevron up /></ScrollArrow>
                  <ScrollThumb />
                  <ScrollArrow $mt={101}><MiniChevron /></ScrollArrow>
                </ScrollTrack>
              </ShapeArea>
            </ShapeGroup>
            <RightCol>
              <ParamBox>
                <PropGrid $cols="26px 114px 124px" $head={29}>
                  <NumHead />
                  <HeadCell>属性名称</HeadCell>
                  <ValueHead>属性值</ValueHead>
                  {params.map(([name, value], i) => (
                    <React.Fragment key={name}>
                      <NumCell $on={i === 0}>{i + 1}</NumCell>
                      <GridCell $bg={i === 0 ? "#0078d7" : undefined} $color={i === 0 ? "#fff" : undefined}>
                        <Lat>{name}</Lat>
                      </GridCell>
                      <GridCell $bg={i === 0 ? "#d6e6f6" : undefined}>
                        <SansNum>{value}</SansNum>
                      </GridCell>
                    </React.Fragment>
                  ))}
                </PropGrid>
              </ParamBox>
              <PreviewGroup $pl={10}>
                <GroupLegend $ml={8}>大图预览</GroupLegend>
                <Frustum size={262} />
              </PreviewGroup>
            </RightCol>
          </DialogMain>
          <DialogFooter>
            <DialogButton $w={90} $primary>确定</DialogButton>
            <DialogButton $w={89}>取消</DialogButton>
          </DialogFooter>
        </DialogBody>
      </Dialog>

      <Annotations width="1847" height="901" viewBox="0 0 1847 901">
        {redBoxes.map(([x, y, w, h]) => (
          <rect key={x} x={x} y={y} width={w} height={h} fill="none" stroke={RED} strokeWidth="7" />
        ))}
        {arrows.map((points) => (
          <polygon key={points} points={points} fill={MAGENTA} />
        ))}
      </Annotations>
    </Page>
  );
};

export default App;
